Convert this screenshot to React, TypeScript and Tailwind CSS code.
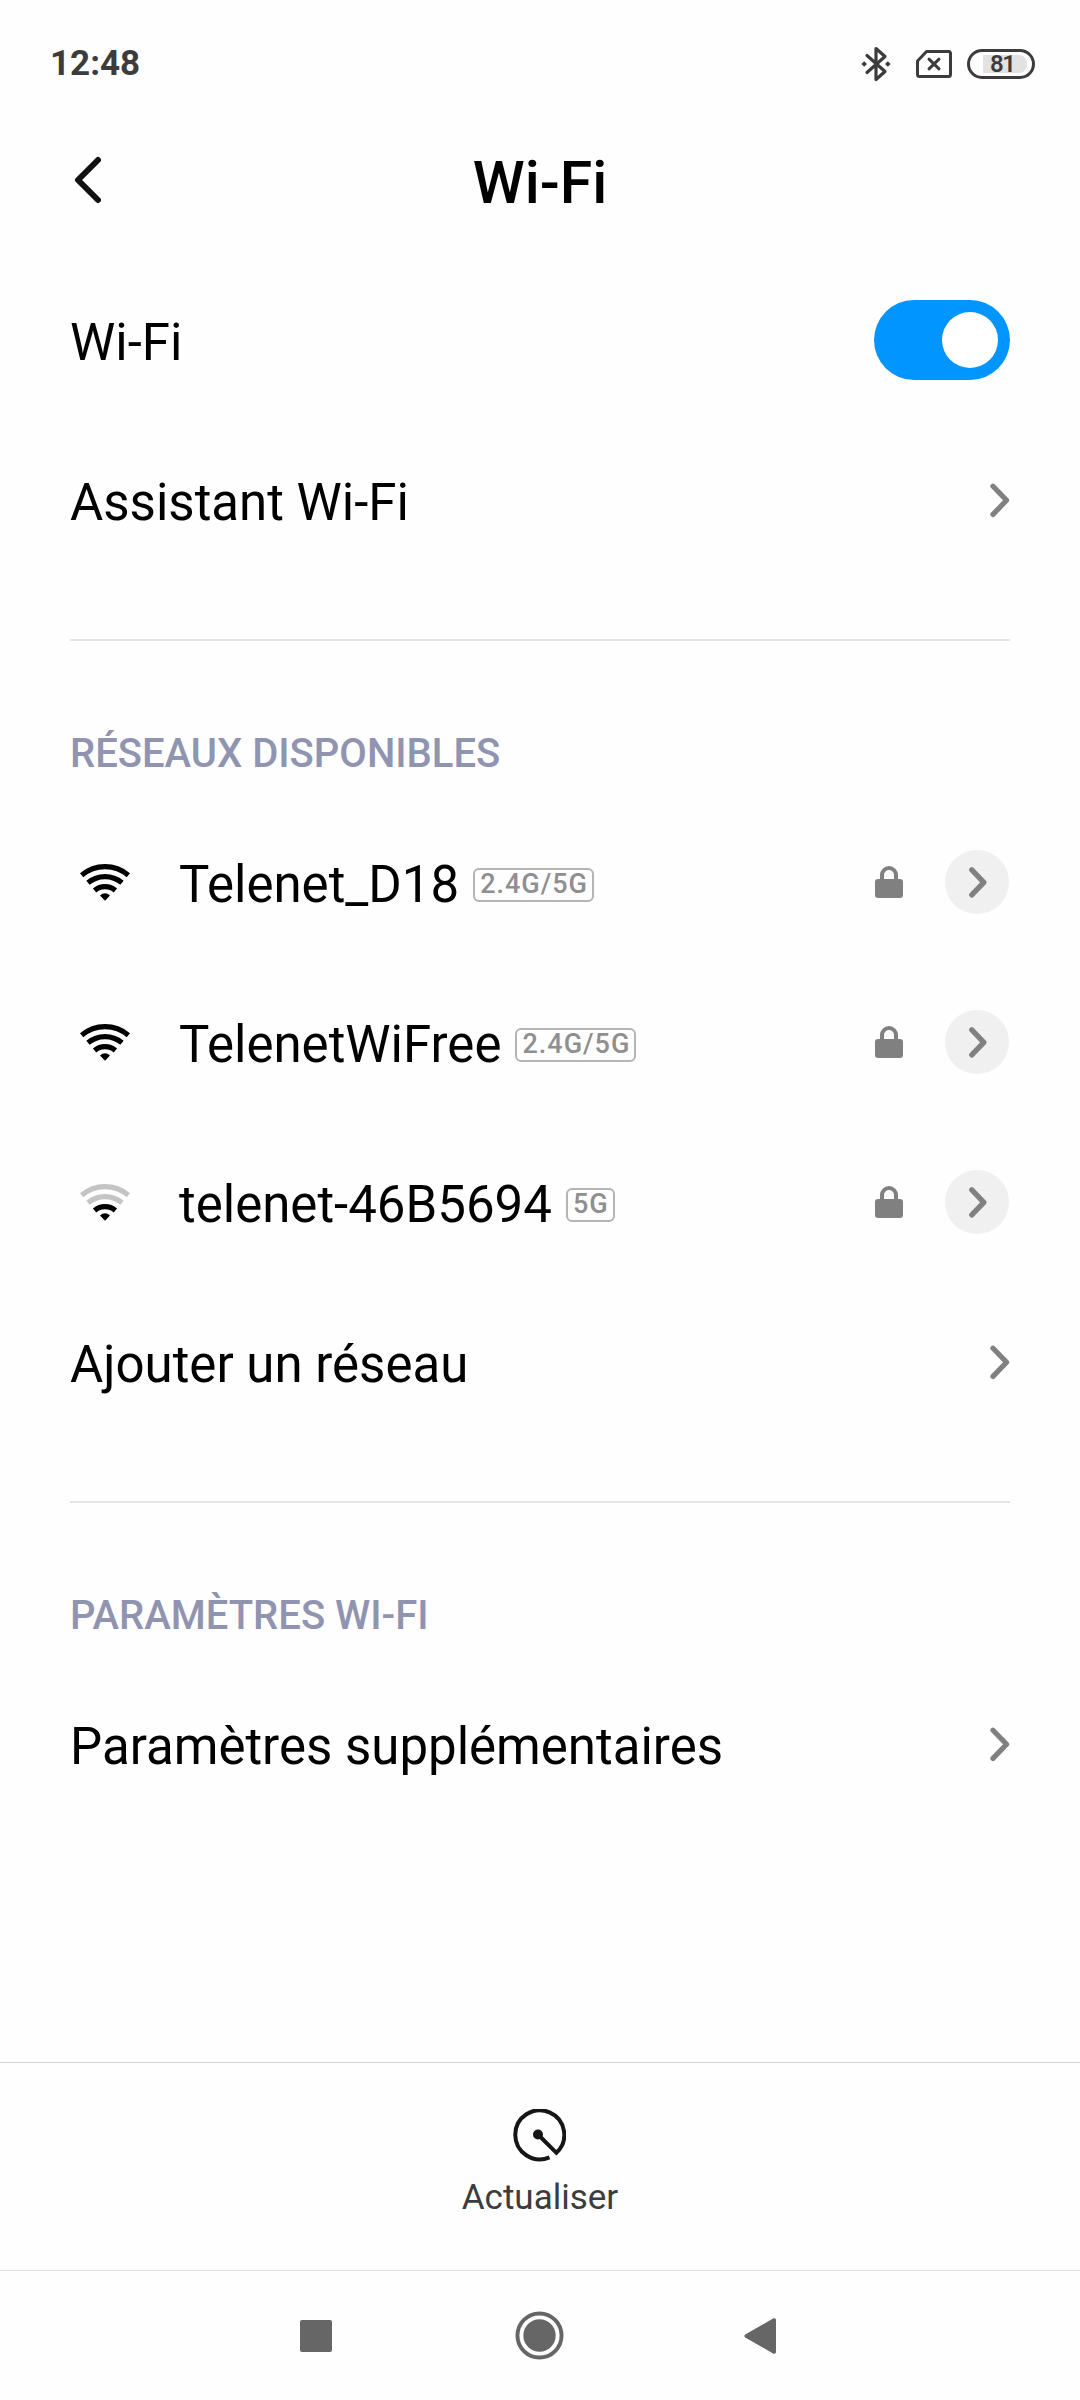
import { useState } from 'react';
import type { ReactNode } from 'react';
import { clsx } from 'clsx';

interface Network {
  ssid: string;
  band: string;
  strength: number;
}

const NETWORKS: Network[] = [
  { ssid: 'Telenet_D18', band: '2.4G/5G', strength: 3 },
  { ssid: 'TelenetWiFree', band: '2.4G/5G', strength: 3 },
  { ssid: 'telenet-46B5694', band: '5G', strength: 1 },
];

function Chevron({ small = false }: { small?: boolean }) {
  return (
    <svg width={small ? 18 : 20} height={small ? 31 : 35} viewBox="0 0 20 35" fill="none" stroke="#808080" strokeWidth={small ? 6 : 5.2} strokeLinecap="round" strokeLinejoin="round">
      <path d="M3 3.2L16.6 17.3L3 31.4" />
    </svg>
  );
}

function WifiIcon({ strength }: { strength: number }) {
  const tone = (level: number) => (strength >= level ? '#000000' : '#c4c4c4');
  return (
    <svg width="50" height="38" viewBox="0 0 50 38" fill="none" strokeWidth="5.2">
      <path d="M1.6 12.2A36 36 0 0 1 48.4 12.2" stroke={tone(3)} />
      <path d="M8 19.8A26.5 26.5 0 0 1 42 19.8" stroke={tone(2)} />
      <path d="M14.6 27.4A16 16 0 0 1 35.4 27.4" stroke={tone(1)} />
      <path d="M20 32.6Q25 28 30 32.6L25 37.8Z" fill="#000000" />
    </svg>
  );
}

function LockIcon() {
  return (
    <svg width="28" height="32" viewBox="0 0 28 32">
      <path d="M7 15V9a7 7 0 0 1 14 0V15" fill="none" stroke="#808080" strokeWidth="4" />
      <rect y="13" width="28" height="19" rx="3" fill="#808080" />
    </svg>
  );
}

function StatusBar() {
  return (
    <div className="flex h-[127px] items-center justify-between pr-[45px] pl-[50px] text-[#3c3c3c]">
      <span className="pt-px text-[35px] font-bold">12:48</span>
      <div className="flex items-center">
        <svg width="30" height="36" viewBox="0 0 30 36" fill="none" stroke="currentColor" strokeWidth="3.2" strokeLinejoin="round" strokeLinecap="round">
          <path d="M6 9.5L24 25.5L15 33.5V2.5L24 10.5L6 26.5" />
          <path d="M0.4 18l2.8-2.8 2.8 2.8-2.8 2.8zM24 18l2.8-2.8 2.8 2.8-2.8 2.8z" fill="currentColor" stroke="none" />
        </svg>
        <svg className="ml-[25px]" width="36" height="28" viewBox="0 0 36 28" fill="none" stroke="currentColor" strokeWidth="3" strokeLinejoin="round" strokeLinecap="round">
          <path d="M10.5 1.5H32.5Q34.5 1.5 34.5 3.5V24.5Q34.5 26.5 32.5 26.5H3.5Q1.5 26.5 1.5 24.5V11Z" />
          <path d="M13 9.2L23 18.8M23 9.2L13 18.8" />
        </svg>
        <div className="ml-[15px] flex h-[30px] w-[68px] items-center justify-end rounded-full border-[3px] border-[#3c3c3c] pr-[5px]">
          <div className="flex h-[18px] w-[44px] items-center rounded-r-lg bg-[#e2e2e2] pl-[7px]">
            <span className="text-2xl leading-none font-semibold tracking-[-1.5px]">81</span>
          </div>
        </div>
      </div>
    </div>
  );
}

function Row({ label, children }: { label: string; children: ReactNode }) {
  return (
    <div className="flex h-40 items-center justify-between">
      <span className="pt-[7px] text-[51px]">{label}</span>
      {children}
    </div>
  );
}

function NetworkRow({ network }: { network: Network }) {
  return (
    <div className="flex h-40 items-center pr-px pl-2.5">
      <WifiIcon strength={network.strength} />
      <span className="ml-[49px] pt-[7px] text-[51px]">{network.ssid}</span>
      <span className="mt-[5px] ml-[14px] flex h-[34px] items-center rounded-md border-2 border-[#b4b4b4] pr-1 pl-[5px] text-[27px] leading-none font-medium tracking-[1px] text-[#8f8f8f]">
        {network.band}
      </span>
      <div className="ml-auto flex items-center gap-[42px]">
        <LockIcon />
        <button className="flex size-16 items-center justify-center rounded-full bg-[#f0f0f0] pl-0.5">
          <Chevron small />
        </button>
      </div>
    </div>
  );
}

function SectionTitle({ children }: { children: ReactNode }) {
  return (
    <h2 className="mt-[59px] h-[163px] border-t-2 border-[#e4e4e4] pt-[83px] text-[40px] leading-[60px] font-medium text-[#9094b0]">
      {children}
    </h2>
  );
}

export default function App() {
  const [enabled, setEnabled] = useState(true);

  return (
    <div className="flex h-[2400px] w-[1080px] flex-col bg-[#fefefe] font-[Roboto,sans-serif] text-black">
      <StatusBar />

      <header className="grid h-[133px] grid-cols-3 items-start px-[74px] pt-7">
        <svg className="mt-px" width="28" height="48" viewBox="0 0 28 48" fill="none" stroke="#111111" strokeWidth="6" strokeLinecap="round" strokeLinejoin="round">
          <path d="M24 4L4 24L24 44" />
        </svg>
        <h1 className="pt-px text-center text-[59px] leading-[54px] font-medium">Wi-Fi</h1>
      </header>

      <main className="px-[70px]">
        <Row label="Wi-Fi">
          <button
            onClick={() => setEnabled(!enabled)}
            className={clsx('flex h-20 w-[136px] items-center rounded-full px-3', enabled ? 'justify-end bg-[#0095ff]' : 'justify-start bg-gray-300')}
          >
            <span className="size-14 rounded-full bg-white" />
          </button>
        </Row>
        <Row label="Assistant Wi-Fi">
          <Chevron />
        </Row>

        <SectionTitle>RÉSEAUX DISPONIBLES</SectionTitle>
        {NETWORKS.map((network) => (
          <NetworkRow key={network.ssid} network={network} />
        ))}
        <Row label="Ajouter un réseau">
          <Chevron />
        </Row>

        <SectionTitle>PARAMÈTRES WI-FI</SectionTitle>
        <Row label="Paramètres supplémentaires">
          <Chevron />
        </Row>
      </main>

      {/* Refresh action */}
      <div className="mt-auto flex h-[208px] flex-col items-center border-t border-[#d4d4d4] pt-[46px]">
        <svg className="mr-0.5" width="54" height="54" viewBox="0 0 54 54" fill="none" stroke="#161616" strokeWidth="4">
          <path d="M37.5 48.3A24.5 24.5 0 1 1 44.4 43.8L26 25.5" />
          <circle cx="26" cy="25.5" r="5" fill="#161616" stroke="none" />
        </svg>
        <span className="mt-[15px] text-[35px] leading-[40px] text-[#3c3c3c]">Actualiser</span>
      </div>

      {/* Android navigation */}
      <nav className="flex h-[130px] items-center border-t border-[#e0e0e0] pl-[300px] text-[#666666]">
        <span className="size-8 rounded-xs bg-[#666666]" />
        <svg className="ml-[183px]" width="49" height="49" viewBox="0 0 50 50">
          <circle cx="25" cy="25" r="22.5" fill="none" stroke="currentColor" strokeWidth="4" />
          <circle cx="25" cy="25" r="16.5" fill="currentColor" />
        </svg>
        <svg className="ml-[180px]" width="32" height="36" viewBox="0 0 32 36" fill="currentColor">
          <path d="M1.2 16.6L29 0.6Q32 -0.4 32 2V34Q32 36.4 29 35.4L1.2 19.4Q-0.4 18 1.2 16.6Z" />
        </svg>
      </nav>
    </div>
  );
}
